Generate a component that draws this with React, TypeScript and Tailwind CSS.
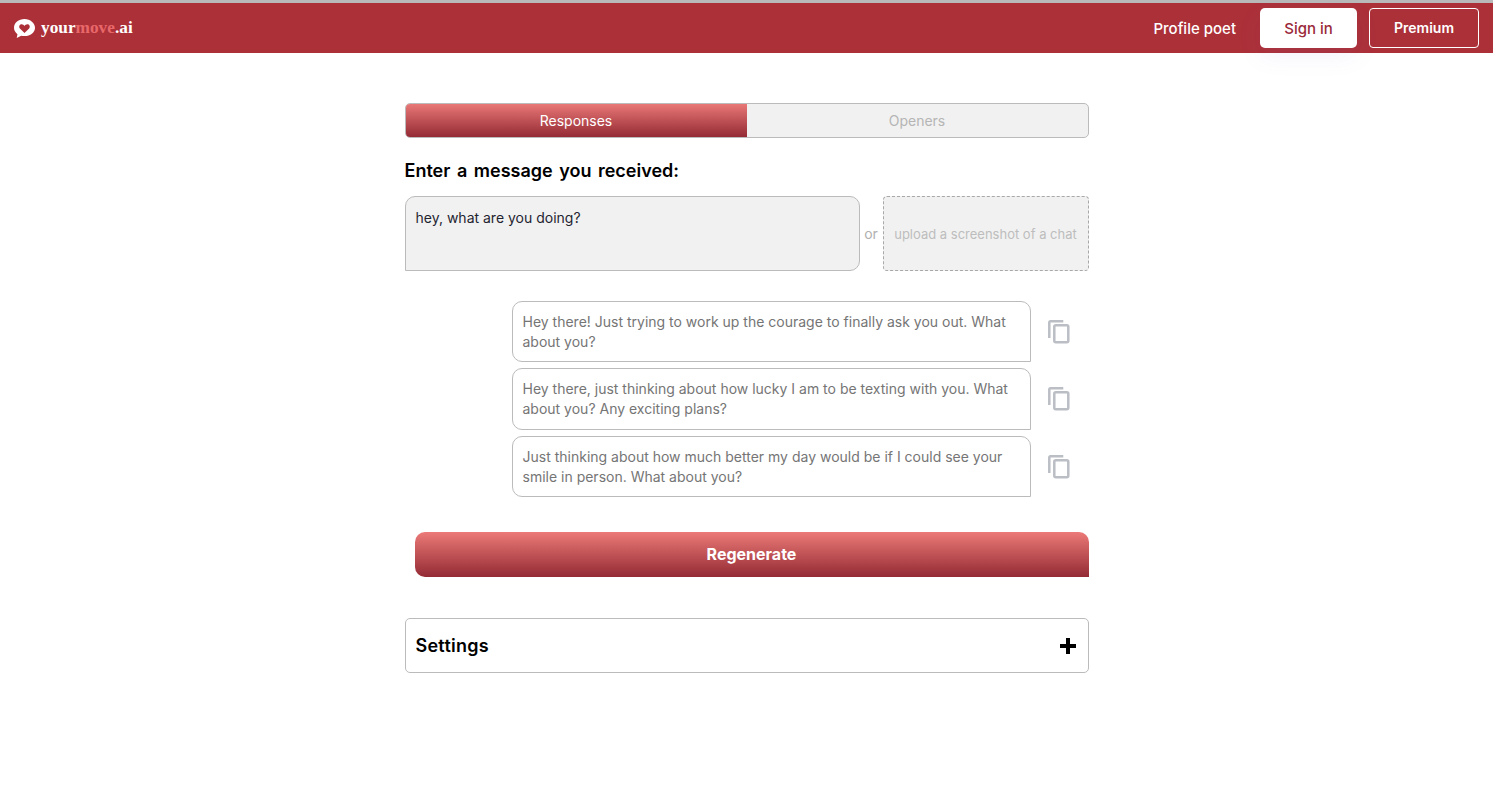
import React from 'react';

const responses = [
  'Hey there! Just trying to work up the courage to finally ask you out. What about you?',
  'Hey there, just thinking about how lucky I am to be texting with you. What about you? Any exciting plans?',
  'Just thinking about how much better my day would be if I could see your smile in person. What about you?',
];

function Logo() {
  return (
    <svg width="21" height="19" viewBox="1 1 20 18" className="mt-[1px] shrink-0">
      <path
        d="M11 1C5.4 1 1 4.7 1 9.3c0 2.500 1.300 4.600 3.300 6.100L3.600 19l4.300-2.200c1 .3 2 .4 3.100.4 5.600 0 10-3.500 10-7.900S16.600 1 11 1z"
        fill="#ffffff"
      />
      <path
        d="M11 14.200 6.600 9.900C5.300 8.500 6.100 5.900 8.200 5.900c1.300 0 2.200.8 2.800 1.700.6-.9 1.500-1.700 2.800-1.700 2.100 0 2.900 2.600 1.600 4z"
        fill="#ac3038"
      />
    </svg>
  );
}

function CopyIcon() {
  return (
    <svg width="22" height="24" viewBox="0 0 22 24" fill="none" stroke="#bbbec4" strokeWidth="2.500" className="shrink-0">
      <path d="M1.300 18V2.300a1 1 0 0 1 1-1h13" />
      <rect x="6.300" y="5.300" width="14" height="17" rx="1.500" />
    </svg>
  );
}

export default function App() {
  return (
    <div className="min-h-[786px] bg-white font-['Inter',sans-serif] text-black">
      <div className="h-[3px] bg-[#b9b9b9]" />
      <header className="flex h-[50px] items-center justify-between bg-[#ac3038] pl-[14px] pr-[14px]">
        <div className="flex items-center gap-[6px]">
          <Logo />
          <span className="font-['Liberation_Serif',serif] text-[17.300px] font-bold text-white">
            your<span className="text-[#e8686a]">move</span>.ai
          </span>
        </div>
        <nav className="flex items-center">
          <a className="mr-[24px] pt-[2px] text-[15px] font-medium text-white">Profile poet</a>
          <button className="mr-[12px] h-[40px] w-[97px] rounded-[5px] bg-white pt-[2px] text-[15px] font-medium text-[#9b2a3a] shadow-[0_8px_24px_rgba(120,120,220,0.08)]">
            Sign in
          </button>
          <button className="h-[40px] w-[110px] rounded-[4px] border border-white text-sm font-semibold text-white">
            Premium
          </button>
        </nav>
      </header>

      <main className="mx-auto w-[684px] pt-[50px]">
        <div className="flex h-[35px] overflow-hidden rounded-[5px] border border-[#bbbbbb] bg-[#f1f1f1] text-sm">
          <div className="flex w-[341px] items-center justify-center bg-gradient-to-b from-[#e97777] to-[#942a35] text-white">
            Responses
          </div>
          <div className="flex flex-1 items-center justify-center text-[#b5b5b5]">Openers</div>
        </div>

        <h2 className="mt-[22px] text-[18px] leading-[22px] font-semibold [word-spacing:2px]">
          Enter a message you received:
        </h2>

        <div className="mt-[14px] flex h-[75px] items-stretch">
          <div className="w-[455px] rounded-[10px] rounded-bl-none border border-[#bbbbbb] bg-[#f1f1f1] px-[10px] py-[11px] text-sm leading-[20px] text-[#1f2430]">
            hey, what are you doing?
          </div>
          <div className="flex w-[23px] items-center justify-center text-sm text-[#b0b0b0]">or</div>
          <div className="flex flex-1 items-center justify-center rounded-[4px] border border-dashed border-[#a8a8a8] bg-[#f1f1f1] pt-[2px] text-[13px] text-[#bdbdbd]">
            upload a screenshot of a chat
          </div>
        </div>

        <div className="mt-[30px] grid grid-rows-[61px_62px_61px] gap-[6px] pl-[107px]">
          {responses.map((text) => (
            <div key={text} className="flex items-center">
              <div className="h-full w-[519px] rounded-[10px] rounded-br-none border border-[#bbbbbb] px-[10px] py-[9.500px] text-sm leading-[20px] text-[#757575]">
                {text}
              </div>
              <div className="ml-[17px]">
                <CopyIcon />
              </div>
            </div>
          ))}
        </div>

        <div className="mt-[35px] pl-[10px]">
          <button className="h-[45px] w-full rounded-[10px] rounded-br-none bg-gradient-to-b from-[#ec7a78] to-[#942a35] pb-[2px] text-base font-bold text-white">
            Regenerate
          </button>
        </div>

        <div className="mt-[41px] flex h-[55px] items-center justify-between rounded-[5px] border border-[#bbbbbb] pl-[10px] pr-[12px]">
          <span className="text-lg font-semibold tracking-[0.25px]">Settings</span>
          <svg width="16" height="16" viewBox="0 0 16 16" fill="#000000">
            <path d="M6 0h4v6h6v4h-6v6H6v-6H0V6h6z" />
          </svg>
        </div>
      </main>
    </div>
  );
}
